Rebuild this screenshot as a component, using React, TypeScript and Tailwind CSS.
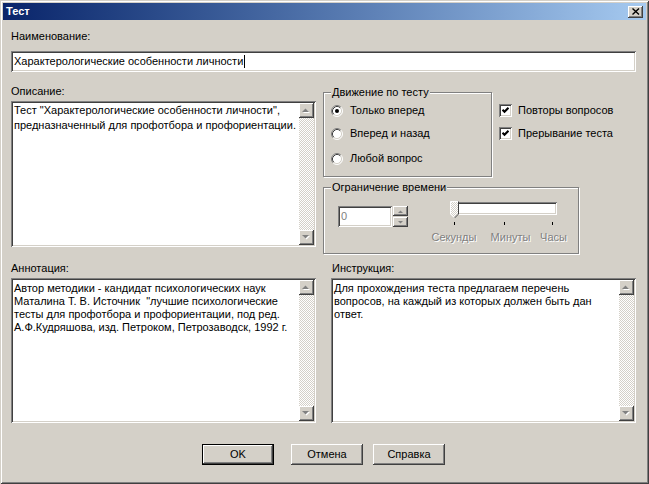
import React from 'react';

const SUNKEN =
  'shadow-[inset_1px_1px_0_#808080,inset_-1px_-1px_0_#ffffff,inset_2px_2px_0_#404040,inset_-2px_-2px_0_#d4d0c8]';
const RAISED =
  'shadow-[inset_-1px_-1px_0_#404040,inset_1px_1px_0_#ffffff,inset_-2px_-2px_0_#808080,inset_2px_2px_0_#d4d0c8]';
const DISABLED = 'text-[#808080] [text-shadow:1px_1px_0_#ffffff]';

function Arrow({ up = false }: { up?: boolean }) {
  const pts = up ? '0,4 7,4 3.5,0.5' : '0,0 7,0 3.5,3.5';
  return (
    <svg width="9" height="6" viewBox="0 0 9 6">
      <polygon points={pts} fill="#ffffff" transform="translate(1 1)" />
      <polygon points={pts} fill="#808080" />
    </svg>
  );
}

function ScrollBar() {
  return (
    <div className="flex w-[15px] flex-col">
      <div className={`flex h-[15px] items-center justify-center bg-[#d4d0c8] ${RAISED}`}>
        <Arrow up />
      </div>
      <div className="flex-1 bg-[image:repeating-conic-gradient(#ffffff_0_25%,#d4d0c8_0_50%)] bg-[length:2px_2px]" />
      <div className={`flex h-[15px] items-center justify-center bg-[#d4d0c8] ${RAISED}`}>
        <Arrow />
      </div>
    </div>
  );
}

function Memo({ lines, className, textClass }: { lines: string[]; className: string; textClass: string }) {
  return (
    <div className={`flex bg-white p-[2px] ${SUNKEN} ${className}`}>
      <div className={`flex-1 pl-[1px] ${textClass}`}>
        {lines.map((l) => (
          <div key={l} className="whitespace-pre">
            {l}
          </div>
        ))}
      </div>
      <ScrollBar />
    </div>
  );
}

function Group({
  title,
  className,
  children,
}: {
  title: string;
  className: string;
  children: React.ReactNode;
}) {
  return (
    <div
      className={`relative border border-[#808080] shadow-[inset_1px_1px_0_#ffffff,1px_1px_0_#ffffff] ${className}`}
    >
      <span className="absolute left-[7px] top-[-7px] bg-[#d4d0c8] px-[1px] whitespace-nowrap">
        {title}
      </span>
      {children}
    </div>
  );
}

function Radio({ checked = false }: { checked?: boolean }) {
  return (
    <svg width="12" height="12" viewBox="0 0 12 12">
      <circle cx="6" cy="6" r="5" fill="#ffffff" />
      <path d="M2.11 9.89 A5.5 5.5 0 0 1 9.89 2.11" stroke="#808080" fill="none" />
      <path d="M9.89 2.11 A5.5 5.5 0 0 1 2.11 9.89" stroke="#ffffff" fill="none" />
      <path d="M2.82 9.18 A4.5 4.5 0 0 1 9.18 2.82" stroke="#404040" fill="none" />
      <path d="M9.18 2.82 A4.5 4.5 0 0 1 2.82 9.18" stroke="#d4d0c8" fill="none" />
      {checked && <circle cx="6" cy="6" r="2" fill="#000000" />}
    </svg>
  );
}

function Check() {
  return (
    <div className={`flex h-[13px] w-[13px] items-center justify-center bg-white ${SUNKEN}`}>
      <svg width="7" height="7" viewBox="0 0 7 7">
        <polyline points="0.5,2.8 2.5,4.8 6.5,0.8" stroke="#000000" strokeWidth="2.2" fill="none" />
      </svg>
    </div>
  );
}

function Button({ label, def = false, className = '' }: { label: string; def?: boolean; className?: string }) {
  return (
    <div className={`h-[21px] w-[72px] ${def ? 'border border-black' : ''} ${className}`}>
      <div className={`flex h-full w-full items-center justify-center bg-[#d4d0c8] ${RAISED}`}>{label}</div>
    </div>
  );
}

export default function App() {
  return (
    <div className="h-[484px] w-[649px] bg-[#d4d0c8] p-[3px] font-['Liberation_Sans',Arial,sans-serif] text-[11px] leading-[13px] text-black shadow-[inset_1px_1px_0_#d4d0c8,inset_-1px_-1px_0_#404040,inset_2px_2px_0_#ffffff,inset_-2px_-2px_0_#808080]">
      <div className="flex h-[17px] items-center bg-gradient-to-r from-[#0a246a] to-[#a6caf0] pl-[3px] pr-[3px]">
        <span className="font-bold text-white">Тест</span>
        <div className={`ml-auto flex h-[12px] w-[15px] items-center justify-center bg-[#d4d0c8] ${RAISED}`}>
          <svg width="8" height="7" viewBox="0 0 8 7">
            <path d="M0.5 0.5 L7 6.5 M7 0.5 L0.5 6.5" stroke="#000000" strokeWidth="1.4" />
          </svg>
        </div>
      </div>

      <div className="flex flex-col pl-[8px]">
        <div className="mt-[10px]">Наименование:</div>
        <div className={`mt-[8px] flex h-[21px] w-[625px] items-center bg-white pl-[3px] ${SUNKEN}`}>
          <span className="whitespace-nowrap">Характерологические особенности личности</span>
          <span className="ml-[1px] h-[13px] w-[1px] bg-black" />
        </div>

        <div className="mt-[13px] flex">
          <div className="flex w-[305px] flex-col">
            <div>Описание:</div>
            <Memo
              className="mt-[3px] h-[146px]"
              textClass="leading-[15px]"
              lines={[
                'Тест "Характерологические особенности личности",',
                'предназначенный для профотбора и профориентации.',
              ]}
            />
          </div>

          <div className="ml-[7px] flex flex-col">
            <div className="mt-[7px] flex">
              <Group title="Движение по тесту" className="h-[85px] w-[169px] pl-[7px] pt-[11px]">
                <div className="flex h-[13px] items-center">
                  <Radio checked />
                  <span className="ml-[7px]">Только вперед</span>
                </div>
                <div className="mt-[10px] flex h-[13px] items-center">
                  <Radio />
                  <span className="ml-[7px]">Вперед и назад</span>
                </div>
                <div className="mt-[12px] flex h-[13px] items-center">
                  <Radio />
                  <span className="ml-[7px]">Любой вопрос</span>
                </div>
              </Group>
              <div className="ml-[7px] flex flex-col pt-[12px]">
                <div className="flex h-[13px] items-center">
                  <Check />
                  <span className="ml-[6px]">Повторы вопросов</span>
                </div>
                <div className="mt-[10px] flex h-[13px] items-center">
                  <Check />
                  <span className="ml-[6px]">Прерывание теста</span>
                </div>
              </div>
            </div>

            <Group title="Ограничение времени" className="mt-[10px] flex h-[67px] w-[256px]">
              <div className={`ml-[14px] mt-[18px] flex h-[21px] w-[54px] items-center bg-white pl-[3px] text-[#808080] ${SUNKEN}`}>
                0
              </div>
              <div className="ml-[1px] mt-[18px] flex h-[21px] w-[15px] flex-col">
                <div className={`flex h-[10px] items-center justify-center bg-[#d4d0c8] ${RAISED}`}>
                  <svg width="5" height="3" viewBox="0 0 5 3">
                    <polygon points="0,3 5,3 2.5,0.5" fill="#808080" />
                  </svg>
                </div>
                <div className={`mt-[1px] flex h-[10px] items-center justify-center bg-[#d4d0c8] ${RAISED}`}>
                  <svg width="5" height="3" viewBox="0 0 5 3">
                    <polygon points="0,0 5,0 2.5,2.5" fill="#808080" />
                  </svg>
                </div>
              </div>
              <div className="ml-[20px] flex flex-col">
                <div className={`relative ml-[24px] mt-[14px] h-[13px] w-[105px] bg-white ${SUNKEN}`}>
                  <svg className="absolute left-[-2px] top-[-1px]" width="9" height="18" viewBox="0 0 9 18">
                    <defs>
                      <pattern id="dith" width="2" height="2" patternUnits="userSpaceOnUse">
                        <rect width="2" height="2" fill="#d4d0c8" />
                        <rect width="1" height="1" fill="#ffffff" />
                        <rect x="1" y="1" width="1" height="1" fill="#ffffff" />
                      </pattern>
                    </defs>
                    <path d="M0.5 0.5 H8.5 V13 L4.5 17 L0.5 13 Z" fill="url(#dith)" />
                    <path d="M0.5 13 V0.5 H8" stroke="#ffffff" fill="none" />
                    <path d="M8.5 0.5 V13 L4.5 17" stroke="#404040" fill="none" />
                    <path d="M0.5 13 L4 16.5" stroke="#ffffff" fill="none" />
                  </svg>
                </div>
                <div className="mt-[7px] flex h-[3px]">
                  <span className="ml-[26px] w-[1px] bg-black" />
                  <span className="ml-[49px] w-[1px] bg-black" />
                  <span className="ml-[47px] w-[1px] bg-black" />
                </div>
                <div className={`ml-[-4px] mt-[6px] flex ${DISABLED}`}>
                  <span className="w-[60px] text-center">Секунды</span>
                  <span className="w-[53px] text-center">Минуты</span>
                  <span className="w-[33px] text-center">Часы</span>
                </div>
              </div>
            </Group>
          </div>
        </div>

        <div className="mt-[8px] flex">
          <div className="flex w-[305px] flex-col">
            <div>Аннотация:</div>
            <Memo
              className="mt-[3px] h-[145px]"
              textClass="pt-[2px]"
              lines={[
                'Автор методики - кандидат психологических наук',
                'Маталина Т. В. Источник  "лучшие психологические',
                'тесты для профотбора и профориентации, под ред.',
                'А.Ф.Кудряшова, изд. Петроком, Петрозаводск, 1992 г.',
              ]}
            />
          </div>
          <div className="ml-[15px] flex w-[305px] flex-col">
            <div className="pl-[1px]">Инструкция:</div>
            <Memo
              className="mt-[3px] h-[145px]"
              textClass="pt-[2px]"
              lines={[
                'Для прохождения теста предлагаем перечень',
                'вопросов, на каждый из которых должен быть дан',
                'ответ.',
              ]}
            />
          </div>
        </div>

        <div className="mt-[21px] flex pl-[191px]">
          <Button label="OK" def />
          <Button label="Отмена" className="ml-[17px]" />
          <Button label="Справка" className="ml-[10px]" />
        </div>
      </div>
    </div>
  );
}
